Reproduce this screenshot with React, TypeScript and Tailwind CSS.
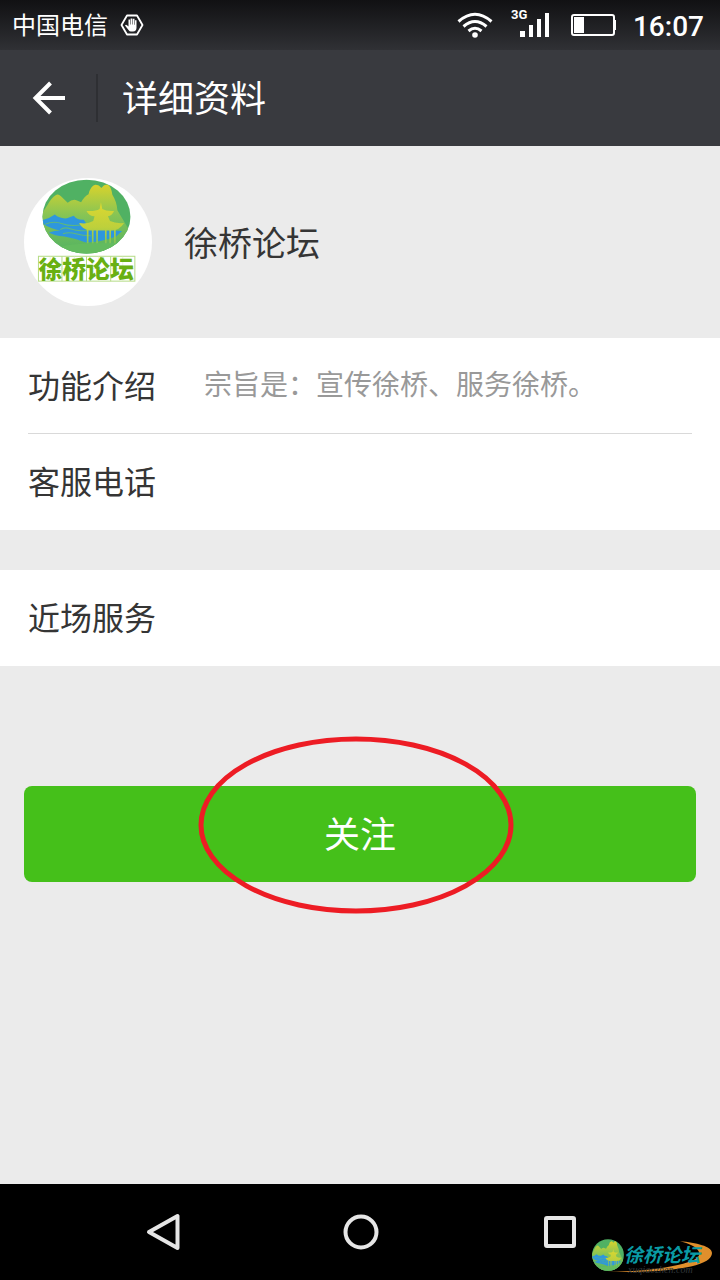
import type { ReactNode } from "react";

const cjk = "font-['Roboto','Noto_Sans_CJK_SC',sans-serif]";

/* Oval landscape: hills, water and a pavilion */
function Landscape({ id }: { id: string }) {
  return (
    <>
      <defs>
        <linearGradient id={`${id}-hill`} x1="0" y1="45" x2="0" y2="250" gradientUnits="userSpaceOnUse">
          <stop offset="0" stopColor="#d9d32c" />
          <stop offset="0.45" stopColor="#86c455" />
          <stop offset="1" stopColor="#52b262" />
        </linearGradient>
        <linearGradient id={`${id}-roof`} x1="0" y1="95" x2="0" y2="225" gradientUnits="userSpaceOnUse">
          <stop offset="0" stopColor="#e0d82e" />
          <stop offset="0.6" stopColor="#bdd03c" />
          <stop offset="1" stopColor="#7cc35a" />
        </linearGradient>
        <clipPath id={`${id}-clip`}>
          <ellipse cx="216" cy="141" rx="131" ry="110" />
        </clipPath>
      </defs>
      <g clipPath={`url(#${id}-clip)`}>
        <rect x="84" y="30" width="264" height="222" fill="#50b163" />
        <path
          d="M84 130 L100 106 Q112 84 124 77 Q132 72 140 80 L160 100 Q174 88 186 92 L200 98 Q210 80 222 74 Q228 50 242 46 Q254 46 260 56 Q270 44 280 46 Q290 52 293 76 Q306 96 308 122 L348 190 V252 H84 Z"
          fill={`url(#${id}-hill)`}
        />
        <path
          d="M84 152 Q104 148 122 135 Q136 148 158 146 L178 138 Q188 152 208 150 L226 178 L322 184 L304 200 Q262 216 214 218 Q186 206 150 200 Q122 198 104 188 Q120 182 138 182 Q110 178 88 164 Z"
          fill="#2e97dd"
        />
        <g fill="none" stroke="#5fb87c" strokeWidth="3">
          <path d="M92 164 Q118 152 144 162 T208 164" />
          <path d="M138 180 Q150 170 170 178 T222 182" />
          <path d="M146 192 Q164 186 184 192 T230 198" />
        </g>
        <path d="M132 232 Q180 218 330 220 L290 252 H160 Z" fill="#63bb5f" />
        <g fill={`url(#${id}-roof)`}>
          <path d="M259 98 L263 118 Q276 126 298 124 Q292 138 280 140 L286 154 Q302 162 328 160 Q314 182 292 182 H226 Q204 180 194 160 Q220 164 236 154 L240 140 Q224 140 216 124 Q242 126 255 118 Z" />
          <path d="M217 180 h5 v40 h-5z M232 180 h5 v40 h-5z M245 180 h5 v40 h-5z M271 180 h5 v40 h-5z M284 180 h5 v40 h-5z M298 180 h5 v40 h-5z" />
        </g>
      </g>
    </>
  );
}

function Avatar() {
  return (
    <svg viewBox="30 26 381 381" className="size-32 shrink-0 rounded-full bg-white" role="img" aria-label="徐桥论坛">
      <Landscape id="avatar" />
      <g fill="none" stroke="#b5dc86" strokeWidth="3">
        <rect x="73" y="259" width="287" height="74" />
        <path d="M143 259 V333 M216 259 V333 M288 259 V333" />
      </g>
      <g stroke="#d9edc0" strokeWidth="1.5">
        <path d="M73 296 H360 M108 259 V333 M180 259 V333 M252 259 V333 M324 259 V333" />
      </g>
      <text
        x="73"
        y="323"
        fontSize="71"
        fontWeight="900"
        fill="#69b012"
        className="font-['Noto_Sans_CJK_SC',sans-serif]"
      >
        徐桥论坛
      </text>
    </svg>
  );
}

function Watermark() {
  return (
    <svg viewBox="0 0 128 42" className="absolute right-2 bottom-1 h-[42px] w-32" role="img" aria-label="徐桥论坛 xuqiaozhen.com">
      <path d="M96 7 C112 9 128 12 128 19 C128 32 90 39 23 38 C75 37 120 29 115 18 C113 13 106 10 96 7 Z" fill="#e08f2c" />
      <svg x="8" y="5" width="32" height="32" viewBox="84 30 264 222" preserveAspectRatio="none">
        <Landscape id="mark" />
      </svg>
      <text x="44" y="39" fontSize="10" fill="#30363a" className="font-['Liberation_Serif',serif] italic">
        xuqiaozhen.com
      </text>
      <text x="40" y="28" fontSize="19" fontWeight="700" fill="#0a9ba5" className="font-['Noto_Sans_CJK_SC',sans-serif] italic">
        徐桥论坛
      </text>
    </svg>
  );
}

function StatusBar() {
  return (
    <div className="flex h-[50px] items-center bg-linear-to-b from-[#111113] to-[#303135] pr-4 pl-3 text-white">
      <span className="pt-0.5 text-2xl">中国电信</span>
      <svg viewBox="0 0 24 22" className="ml-3 h-[22px] w-6">
        <path d="M7 1.5 H17 L22.5 11 L17 20.5 H7 L1.5 11 Z" fill="none" stroke="#fff" strokeWidth="1.8" strokeLinejoin="round" />
        <path d="M8.5 5.5 h1.6 v5 h.5 v-6 h1.7 v6 h.5 v-5.7 h1.7 v6 h.5 v-4.5 h1.5 v7.5 q0 3.7 -3.5 3.7 h-2 q-1.5 0 -2.5 -1.5 l-3.5 -4.5 q.8 -1.2 2 -.3 l1.5 1.3 z" fill="#fff" />
      </svg>

      <svg viewBox="0 0 36 28" className="ml-auto h-7 w-9">
        <g fill="none" stroke="#fff" strokeWidth="3">
          <path d="M1.5 10.5 Q18 -4 34.5 10.5" />
          <path d="M6.5 15.5 Q18 5.5 29.5 15.5" />
          <path d="M11.5 20 Q18 14.5 24.5 20" />
        </g>
        <circle cx="18" cy="24" r="2.8" fill="#fff" />
      </svg>
      <svg viewBox="0 -4 40 40" className="ml-[18px] size-10">
        <text x="0" y="10" fontSize="13" fontWeight="700" fill="#fff">
          3G
        </text>
        <path d="M9 22 h5 v6 h-5z M18 16 h4 v12 h-4z M26 10 h4 v18 h-4z M34 4 h4 v24 h-4z" fill="#fff" />
      </svg>
      <svg viewBox="0 0 46 22" className="ml-5 h-[22px] w-[46px]">
        <rect x="1" y="1" width="42" height="20" rx="2" fill="none" stroke="#fff" strokeWidth="2" />
        <path d="M3 3 h10 v16 h-10z M44 6 h1 v10 h-1z" fill="#fff" />
      </svg>
      <time className="ml-4 pt-1 text-[28px] font-medium">16:07</time>
    </div>
  );
}

function Row({ label, children }: { label: string; children?: ReactNode }) {
  return (
    <div className="flex h-24 items-center">
      <dt className="w-44 shrink-0 pt-0.5 text-[32px] text-[#353535]">{label}</dt>
      <dd className="text-[28px] text-[#999999]">{children}</dd>
    </div>
  );
}

export default function App() {
  return (
    <div className={`flex min-h-screen flex-col bg-[#ebebeb] ${cjk}`}>
      <StatusBar />

      <header className="flex h-24 items-center bg-[#393a3f] text-white">
        <button type="button" aria-label="返回" className="flex h-12 w-[98px] items-center border-r-2 border-[#2e2f33] pl-8">
          <svg viewBox="0 0 34 34" className="size-[34px]" fill="none" stroke="#fff" strokeWidth="4">
            <path d="M33 17 H4 M18.5 2 L3.5 17 L18.5 32" />
          </svg>
        </button>
        <h1 className="pt-1 pl-6 text-4xl">详细资料</h1>
      </header>

      <main className="flex-1">
        <section className="flex h-48 items-center gap-8 px-6">
          <Avatar />
          <h2 className="pt-1 text-[34px] text-[#353535]">徐桥论坛</h2>
        </section>

        <dl className="divide-y divide-[#d9d9d9] bg-white px-7">
          <Row label="功能介绍">宗旨是：宣传徐桥、服务徐桥。</Row>
          <Row label="客服电话" />
        </dl>

        <dl className="mt-10 bg-white px-7">
          <Row label="近场服务" />
        </dl>

        <div className="relative mx-6 mt-30">
          <button type="button" className="h-24 w-full rounded-lg bg-[#45c01a] pt-1 text-4xl text-white">
            关注
          </button>
          {/* hand-drawn highlight around the follow button */}
          <svg viewBox="0 0 316 178" className="pointer-events-none absolute -top-[50px] left-[174px] h-[178px] w-[316px]">
            <ellipse cx="158" cy="89" rx="155" ry="86" fill="none" stroke="#ed1c24" strokeWidth="5" />
          </svg>
        </div>
      </main>

      <nav className="relative flex h-24 items-center justify-between bg-black px-36">
        <button type="button" aria-label="后退">
          <svg viewBox="0 0 36 40" className="h-10 w-9" fill="none" stroke="#e6e6e6" strokeWidth="4" strokeLinejoin="round">
            <path d="M33.5 4 V36 L5 20 Z" />
          </svg>
        </button>
        <button type="button" aria-label="主屏幕">
          <svg viewBox="0 0 36 36" className="size-9" fill="none" stroke="#e6e6e6" strokeWidth="4">
            <circle cx="18" cy="18" r="15.5" />
          </svg>
        </button>
        <button type="button" aria-label="最近任务">
          <svg viewBox="0 0 34 34" className="size-[34px]" fill="none" stroke="#e6e6e6" strokeWidth="4">
            <rect x="4" y="3" width="28" height="28" rx="1" />
          </svg>
        </button>
        <Watermark />
      </nav>
    </div>
  );
}
